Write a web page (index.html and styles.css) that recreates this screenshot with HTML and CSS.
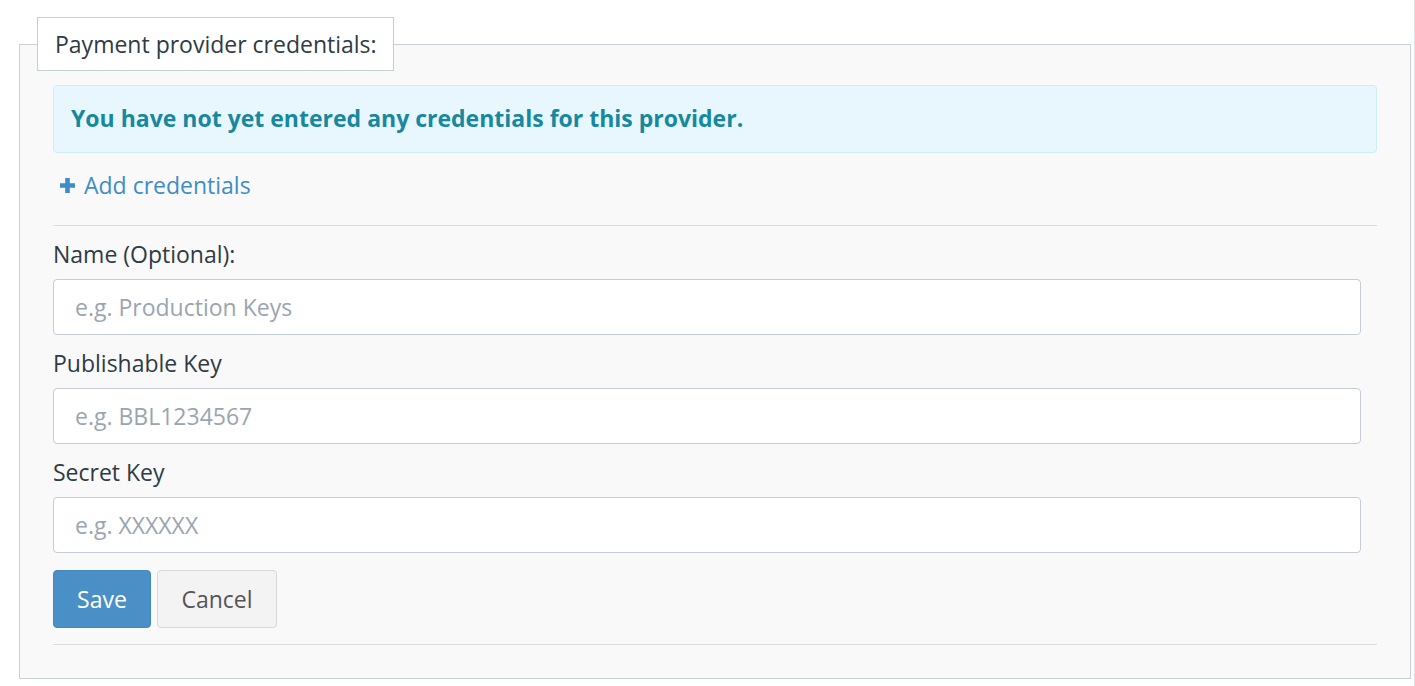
FILE: index.html
```html
<!DOCTYPE html>
<html lang="en">
<head>
<meta charset="utf-8">
<title>Payment provider credentials</title>
<link rel="stylesheet" href="styles.css">
</head>
<body>
<div class="page">
  <fieldset class="panel">
    <legend class="panel-legend">Payment provider credentials:</legend>
    <div class="panel-body">
      <div class="alert">You have not yet entered any credentials for this provider.</div>
      <a class="add-link" href="#">
        <svg class="plus" viewBox="0 0 15 15" width="15" height="15" aria-hidden="true"><path d="M5.2 0h4.6v5.2H15v4.6H9.8V15H5.2V9.8H0V5.2h5.2z" fill="currentColor"/></svg>
        <span>Add credentials</span>
      </a>
      <hr class="rule rule-top">
      <form class="form">
        <div class="field">
          <label class="label" for="name">Name (Optional):</label>
          <input class="input" id="name" type="text" placeholder="e.g. Production Keys">
        </div>
        <div class="field">
          <label class="label" for="pub">Publishable Key</label>
          <input class="input" id="pub" type="text" placeholder="e.g. BBL1234567">
        </div>
        <div class="field">
          <label class="label" for="sec">Secret Key</label>
          <input class="input" id="sec" type="text" placeholder="e.g. XXXXXX">
        </div>
        <div class="actions">
          <button type="button" class="btn btn-primary">Save</button>
          <button type="button" class="btn btn-default">Cancel</button>
        </div>
      </form>
      <hr class="rule rule-bottom">
    </div>
  </fieldset>
</div>
</body>
</html>
```

FILE: styles.css
```css
* { box-sizing: border-box; }
html, body { margin: 0; padding: 0; background: #fff; }
body {
  font-family: "Open Sans", "Noto Sans", sans-serif;
  font-size: 23px;
  line-height: 32px;
  color: #2f3b45;
}
.page {
  padding: 17px 3px 0 19px;
  border-right: 1px solid #dde3e6;
  min-height: 686px;
}
.panel {
  margin: 0;
  padding: 0 17px 33px 17px;
  border: 1px solid #c9d1d5;
  background: #f9f9f9;
  width: 1392px;
}
.panel-legend {
  padding: 10px 16px 10px 17px;
  margin: 0;
  background: #fff;
  border: 1px solid #c5d0d3;
  color: #2f3b45;
  font-size: 23px;
  line-height: 32px;
}
.panel-body {
  padding: 14px 16px 0 16px;
}
.alert {
  background: #e8f7fd;
  border: 1px solid #cdeef8;
  border-radius: 4px;
  color: #17889f;
  font-weight: 700;
  padding: 16px 17px 18px 17px;
}
.add-link {
  display: flex;
  align-items: center;
  gap: 9px;
  margin-top: 16px;
  padding-left: 7px;
  color: #3f8dc6;
  text-decoration: none;
}
.plus { display: block; }
.rule {
  border: 0;
  border-top: 1px solid #dcdcdc;
  margin: 0;
}
.rule-top { margin-top: 24px; }
.form { padding-right: 16px; }
.field { display: flex; flex-direction: column; }
.label {
  display: block;
  margin-top: 12px;
  margin-bottom: 9px;
  color: #2f3b45;
}
.input {
  height: 56px;
  border: 1px solid #c4cdd6;
  border-radius: 4px;
  background: #fff;
  padding: 0 21px;
  font-family: inherit;
  font-size: 23px;
  color: #2f3b45;
}
.input::placeholder { color: #9aa5b1; }
.actions {
  display: flex;
  gap: 6px;
  margin-top: 17px;
}
.btn {
  height: 58px;
  font-family: inherit;
  font-size: 23px;
  border-radius: 4px;
  padding: 0;
  cursor: pointer;
}
.btn-primary {
  background: #4a8fc5;
  border: 1px solid #4289c0;
  color: #fff;
  width: 98px;
}
.btn-default {
  background: #f3f3f3;
  border: 1px solid #d8d8d8;
  color: #555;
  width: 120px;
}
.rule-bottom { margin-top: 16px; }
```
